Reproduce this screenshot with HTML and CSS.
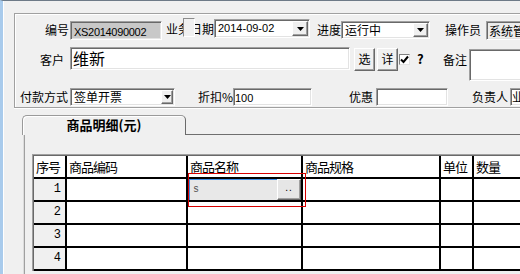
FILE: index.html
```html
<!DOCTYPE html>
<html>
<head>
<meta charset="utf-8">
<link rel="stylesheet" href="styles.css">
</head>
<body>
<div class="win">
  <div class="group">
    <div class="row r1">
      <span class="lbl l-bh">编号</span>
      <div class="sunk field gray f-bh"><span class="asc">XS2014090002</span></div>
      <span class="lbl l-rq">业务日期<i class="ovl"></i></span>
      <div class="sunk combo f-date"><span class="ctext asc">2014-09-02</span><span class="rais dd"><svg width="7" height="4" viewBox="0 0 7 4"><path d="M0 0H7L3.5 4Z"/></svg></span></div>
      <span class="lbl l-jd">进度</span>
      <div class="sunk combo f-jd"><span class="ctext">运行中</span><span class="rais dd"><svg width="7" height="4" viewBox="0 0 7 4"><path d="M0 0H7L3.5 4Z"/></svg></span></div>
      <span class="lbl l-czy">操作员</span>
      <div class="sunk field light f-czy">系统管理员</div>
    </div>
    <div class="row r2">
      <span class="lbl l-kh">客户</span>
      <div class="sunk field f-kh">维新</div>
      <span class="rais btn b1">选</span>
      <span class="rais btn b2">详</span>
      <span class="chk"><svg width="9" height="9" viewBox="0 0 9 9"><path d="M1 4.5L3.5 7L8 1.5" fill="none" stroke="#000" stroke-width="2"/></svg></span>
      <span class="q">?</span>
      <span class="lbl l-bz">备注</span>
      <div class="sunk field f-bz"></div>
    </div>
    <div class="row r3">
      <span class="lbl l-fk">付款方式</span>
      <div class="sunk combo f-fk"><span class="ctext">签单开票</span><span class="rais dd"><svg width="7" height="4" viewBox="0 0 7 4"><path d="M0 0H7L3.5 4Z"/></svg></span></div>
      <span class="lbl l-zk">折扣%</span>
      <div class="sunk field f-zk"><span class="asc">100</span></div>
      <span class="lbl l-yh">优惠</span>
      <div class="sunk field f-yh"></div>
      <span class="lbl l-fz">负责人</span>
      <div class="sunk field f-fz">业务员</div>
    </div>
  </div>

  <div class="tabs">
    <div class="tab">商品明细(元)</div>
    <div class="page">
      <div class="gridwrap">
        <div class="grid">
          <div class="c h">序号</div>
          <div class="c h">商品编码</div>
          <div class="c h">商品名称</div>
          <div class="c h">商品规格</div>
          <div class="c h">单位</div>
          <div class="c h">数量</div>

          <div class="c n">1</div>
          <div class="c"></div>
          <div class="c ec">
            <div class="ed"><span class="edbox">s</span><span class="rais edbtn">..</span></div>
          </div>
          <div class="c"></div>
          <div class="c"></div>
          <div class="c"></div>

          <div class="c n">2</div>
          <div class="c"></div>
          <div class="c"></div>
          <div class="c"></div>
          <div class="c"></div>
          <div class="c"></div>

          <div class="c n">3</div>
          <div class="c"></div>
          <div class="c"></div>
          <div class="c"></div>
          <div class="c"></div>
          <div class="c"></div>

          <div class="c n">4</div>
          <div class="c"></div>
          <div class="c"></div>
          <div class="c"></div>
          <div class="c"></div>
          <div class="c"></div>
        </div>
        <div class="focus"></div>
      </div>
    </div>
  </div>
</div>
</body>
</html>
```

FILE: styles.css
```css
* { box-sizing: border-box; }

body {
  margin: 0;
  background: #f0f0f0;
  font-family: "Noto Sans CJK SC", sans-serif;
  font-size: 12px;
  color: #000;
  overflow: hidden;
}

.win {
  width: 520px;
  height: 274px;
  border-top: 1px solid #6d7a87;
  border-left: 3px solid #a9cbec;
  box-shadow: inset 1px 0 #fff;
  overflow: hidden;
  position: relative;
}

/* ---------- group box ---------- */
.group {
  width: 620px;
  height: 95px;
  margin: 12px 0 0 11px;
  border: 1px solid #a0a0a0;
  border-right: none;
  box-shadow: inset 1px 1px #fff, 0 1px #fff;
  padding-top: 4px;
}

.row {
  display: flex;
  align-items: flex-start;
}

.r1 { height: 23px; }
.r2 { height: 34px; margin-top: 6px; }
.r3 { height: 18px; margin-top: 7px; }

.lbl {
  display: block;
  flex: none;
  height: 18px;
  line-height: 18px;
  white-space: nowrap;
}

.asc {
  font-family: "Liberation Sans", sans-serif;
  font-size: 11px;
}

/* sunken & raised 3D edges */
.sunk {
  flex: none;
  border: 1px solid;
  border-color: #a0a0a0 #fff #fff #a0a0a0;
  box-shadow: inset 1px 1px #696969, inset -1px -1px #e3e3e3;
  padding: 1px;
  background: #fff;
}

.rais {
  border: 1px solid;
  border-color: #fff #696969 #696969 #fff;
  box-shadow: inset -1px -1px #a0a0a0;
  background: #f0f0f0;
}

.field {
  padding-left: 3px;
  line-height: 15px;
  white-space: nowrap;
}

.field.gray { background: #c8c8c8; }
.field.light { background: #ececec; }

.combo {
  display: flex;
}

.ctext {
  flex: 1;
  padding-left: 2px;
  line-height: 15px;
  white-space: nowrap;
}

.dd {
  flex: none;
  width: 16px;
  display: flex;
  align-items: center;
  justify-content: center;
}

/* row 1 */
.l-bh { margin: 3px 0 0 30px; width: 24px; }
.f-bh { margin: 3px 0 0 1px; width: 92px; height: 19px; }
.f-bh .asc { font-size: 11px; letter-spacing: -0.3px; }
.l-rq { margin: 2px 0 0 4px; width: 48px; position: relative; }
.ovl {
  position: absolute;
  left: 17px;
  top: -2px;
  width: 12px;
  height: 19px;
  background: #f0f0f0;
  border: 1px solid;
  border-color: #8c8c8c #fff #fff #8c8c8c;
}
.f-date { margin: 1px 0 0 0; width: 96px; height: 19px; }
.f-date .ctext { line-height: 15px; }
.l-jd { margin: 3px 0 0 7px; width: 24px; }
.f-jd { margin: 3px 0 0 0; width: 89px; height: 18px; }
.f-jd .ctext { line-height: 14px; }
.f-jd .dd { width: 15px; }
.l-czy { margin: 3px 0 0 15px; width: 36px; }
.f-czy { margin: 3px 0 0 5px; width: 100px; height: 19px; padding-left: 2px; }

/* row 2 */
.l-kh { margin: 1px 0 0 25px; width: 24px; height: 23px; line-height: 23px; }
.f-kh {
  margin-left: 6px;
  width: 280px;
  height: 23px;
  font-size: 16px;
  line-height: 19px;
  padding-left: 2px;
}
.btn {
  flex: none;
  width: 21px;
  height: 23px;
  margin-top: 1px;
  line-height: 20px;
  text-align: center;
}
.b1 { margin-left: 4px; }
.b2 { margin-left: 2px; }
.chk {
  flex: none;
  width: 11px;
  height: 11px;
  margin: 7px 0 0 1px;
  background: #fff;
  border: 1px solid;
  border-color: #808080 #e3e3e3 #e3e3e3 #808080;
  display: flex;
  align-items: center;
  justify-content: center;
}
.q {
  flex: none;
  width: 8px;
  margin: 3px 0 0 7px;
  font-weight: bold;
  font-size: 13px;
  line-height: 18px;
}
.l-bz { margin: 4px 0 0 18px; width: 24px; }
.f-bz { margin: 2px 0 0 2px; width: 100px; height: 32px; }

/* row 3 */
.l-fk { margin-left: 5px; width: 48px; }
.f-fk { margin-left: 2px; width: 105px; height: 18px; }
.f-fk .ctext { line-height: 14px; }
.f-fk .dd { width: 12px; }
.l-zk { margin-left: 23px; width: 34px; }
.f-zk { margin-left: 1px; width: 79px; height: 18px; line-height: 14px; padding-left: 1px; }
.l-yh { margin-left: 37px; width: 24px; }
.f-yh { margin-left: 3px; width: 72px; height: 18px; }
.l-fz { margin-left: 24px; width: 36px; }
.f-fz { margin-left: 2px; width: 60px; height: 18px; line-height: 14px; padding-left: 1px; }

/* ---------- tab control ---------- */
.tabs {
  margin: 7px 0 0 19px;
}

.tab {
  position: relative;
  z-index: 1;
  width: 164px;
  height: 20px;
  margin-bottom: -1px;
  border: 1px solid #9a9a9a;
  border-right-color: #6a6a6a;
  border-bottom: none;
  border-radius: 5px 5px 0 0;
  box-shadow: inset 1px 1px #fff;
  background: #f0f0f0;
  font-weight: bold;
  font-size: 13px;
  text-align: center;
  line-height: 18px;
}

.page {
  margin-left: 1px;
  height: 200px;
  width: 600px;
  border-top: 1px solid #6f6f6f;
  border-left: 1px solid #dcdcdc;
  box-shadow: inset 1px 0 #a0a0a0;
  padding: 19px 0 0 8px;
}

.gridwrap {
  position: relative;
  width: 560px;
  border-top: 1px solid #a0a0a0;
  border-left: 1px solid #a0a0a0;
}

.grid {
  display: grid;
  grid-template-columns: 33px 121px 115px 138px 33px 200px;
  grid-auto-rows: 23px;
  border-top: 1px solid #696969;
  border-left: 1px solid #696969;
  background: #fff;
}

.c {
  border-right: 2px solid #000;
  border-bottom: 2px solid #000;
  background: #fff;
}

.h {
  padding-left: 2px;
  font-size: 13px;
  letter-spacing: -1px;
  line-height: 21px;
  white-space: nowrap;
}

.n {
  background: #f0f0f0;
  text-align: right;
  padding-right: 4px;
  font-family: "Liberation Mono", monospace;
  font-size: 12px;
  line-height: 21px;
}

.ec { padding-left: 1px; }

.ed {
  display: flex;
  height: 21px;
}

.edbox {
  width: 88px;
  background: #e8e8e8;
  border-top: 1px solid #3d8ee6;
  border-left: 1px solid #3d8ee6;
  padding-left: 3px;
  font-family: "Liberation Mono", monospace;
  font-size: 10px;
  line-height: 19px;
  color: #555;
}

.edbtn {
  flex: 1;
  background: #e6e6e6;
  font-family: "Liberation Sans", sans-serif;
  font-size: 10px;
  line-height: 16px;
  text-align: center;
  letter-spacing: 1px;
}

.focus {
  position: absolute;
  left: 155px;
  top: 18px;
  width: 118px;
  height: 34px;
  border: 1px solid #d90000;
  pointer-events: none;
}
```
